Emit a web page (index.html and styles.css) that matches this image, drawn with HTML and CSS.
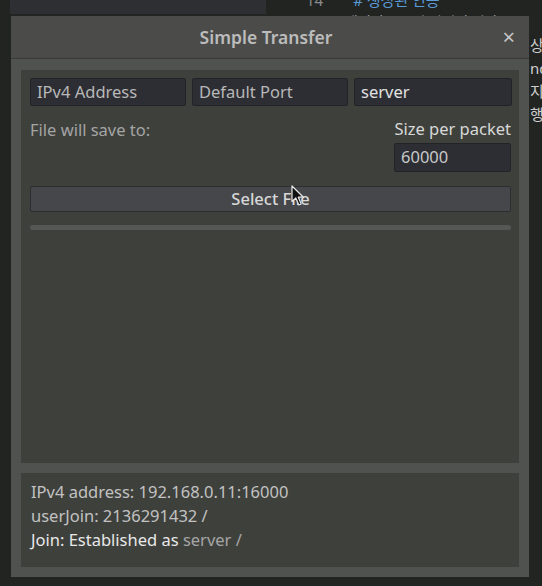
FILE: index.html
```html
<!DOCTYPE html>
<html>
<head>
<meta charset="utf-8">
<link rel="stylesheet" href="styles.css">
</head>
<body>
<div class="desktop">
  <div class="editor-tab"></div>
  <div class="code-line code-second">생성된 토큰과 파일이 저장</div>
  <div class="code-line code-top"><span class="ln">14</span><span class="cm"># 생성된 인증</span></div>
  <div class="code-side">
    <div>상</div>
    <div>nd</div>
    <div>지</div>
    <div>행</div>
  </div>

  <div class="window">
    <div class="titlebar">
      <span class="title">Simple Transfer</span>
      <span class="close">×</span>
    </div>
    <div class="win-body">
      <div class="panel main">
        <div class="inputs">
          <div class="field placeholder">IPv4 Address</div>
          <div class="field placeholder">Default Port</div>
          <div class="field value">server</div>
        </div>
        <div class="options">
          <div class="save-label">File will save to:</div>
          <div class="packet">
            <div class="packet-label">Size per packet</div>
            <div class="field value packet-field">60000</div>
          </div>
        </div>
        <div class="button">Select File</div>
        <div class="progress"></div>
        <svg class="cursor" width="14" height="22" viewBox="0 0 14 22">
          <path d="M1 1 L1 16.5 L4.8 13 L7.8 20 L10.2 19 L7.3 12.2 L12.4 12.2 Z" fill="#111" stroke="#e8e8e8" stroke-width="1.2" stroke-linejoin="round"/>
        </svg>
      </div>
      <div class="panel log">
        <div class="log-line">IPv4 address: 192.168.0.11:16000</div>
        <div class="log-line">userJoin: 2136291432 /</div>
        <div class="log-line"><span class="bright">Join: Established as</span> server /</div>
      </div>
    </div>
  </div>
</div>
</body>
</html>
```
FILE: styles.css
```css
* { box-sizing: border-box; }
html, body {
  margin: 0;
  padding: 0;
  background: #232523;
  overflow: hidden;
}
.desktop {
  position: relative;
  width: 542px;
  height: 586px;
  background: #222422;
  font-family: "Noto Sans", "Noto Sans CJK KR", sans-serif;
  overflow: hidden;
}
.editor-tab {
  position: absolute;
  left: 10px;
  top: 0;
  width: 256px;
  height: 14px;
  background: #2e2f32;
}
.code-line {
  position: absolute;
  font-size: 15px;
  line-height: 18px;
  white-space: nowrap;
}
.code-top {
  left: 306px;
  top: -9px;
}
.code-top .ln {
  color: #8a8c8e;
  margin-right: 30px;
}
.code-top .cm {
  color: #5a9bd8;
}
.code-second {
  left: 345px;
  top: 13px;
  color: #c8c8c8;
  font-size: 14px;
}
.code-side {
  position: absolute;
  left: 530px;
  top: 34px;
  color: #cfcfcf;
  font-size: 15px;
  line-height: 23px;
  white-space: nowrap;
}
.window {
  position: absolute;
  left: 11px;
  top: 16px;
  width: 518px;
  height: 561px;
  background: #505250;
  display: flex;
  flex-direction: column;
}
.titlebar {
  height: 43px;
  background: #4b4c4a;
  border-bottom: 1px solid #393a38;
  position: relative;
  display: flex;
  align-items: center;
  justify-content: center;
}
.title {
  color: #bcbcbc;
  font-size: 17.5px;
  font-weight: 600;
  margin-right: 8px;
}
.close {
  position: absolute;
  right: 14px;
  top: 8px;
  color: #c4c4c4;
  font-size: 22px;
  line-height: 24px;
}
.win-body {
  flex: 1;
  padding: 11px 10px 10px 10px;
  display: flex;
  flex-direction: column;
  gap: 10px;
}
.panel {
  background: #3e403c;
}
.main {
  position: relative;
  height: 393px;
  padding: 8px 8px 0 9px;
}
.inputs {
  display: grid;
  grid-template-columns: 156px 156px 158px;
  gap: 6px;
}
.field {
  height: 28px;
  background: #2d2e34;
  border: 1px solid #222327;
  border-radius: 2px;
  font-size: 16.5px;
  line-height: 25px;
  padding-left: 6px;
  white-space: nowrap;
  overflow: hidden;
}
.placeholder { color: #b8b8b8; }
.value { color: #e2e2e2; }
.options {
  display: flex;
  justify-content: space-between;
  margin-top: 12px;
}
.save-label {
  color: #a4a4a4;
  font-size: 16.5px;
  line-height: 22px;
  margin-top: 1px;
}
.packet {
  display: flex;
  flex-direction: column;
  align-items: flex-end;
}
.packet-label {
  color: #d8d8d8;
  font-size: 16.5px;
  font-weight: 400;
  line-height: 22px;
}
.packet-field {
  width: 117px;
  height: 29px;
  margin-top: 3px;
  color: #c8c8c8;
}
.button {
  margin-top: 14px;
  height: 26px;
  background: #46474b;
  border: 1px solid #2c2d31;
  border-radius: 2px;
  color: #d8d8d8;
  font-size: 16.5px;
  font-weight: 500;
  line-height: 23px;
  text-align: center;
}
.progress {
  margin-top: 13px;
  height: 5px;
  background: #555755;
  border-radius: 3px;
}
.cursor {
  position: absolute;
  left: 270px;
  top: 115px;
}
.log {
  height: 94px;
  padding: 7px 9px 0 10px;
}
.log-line {
  color: #c2c2c2;
  font-size: 16.5px;
  line-height: 24px;
  white-space: nowrap;
}
.log-line .bright {
  color: #e8e8e8;
}
.log-line:last-child {
  color: #a6a6a6;
}
```
